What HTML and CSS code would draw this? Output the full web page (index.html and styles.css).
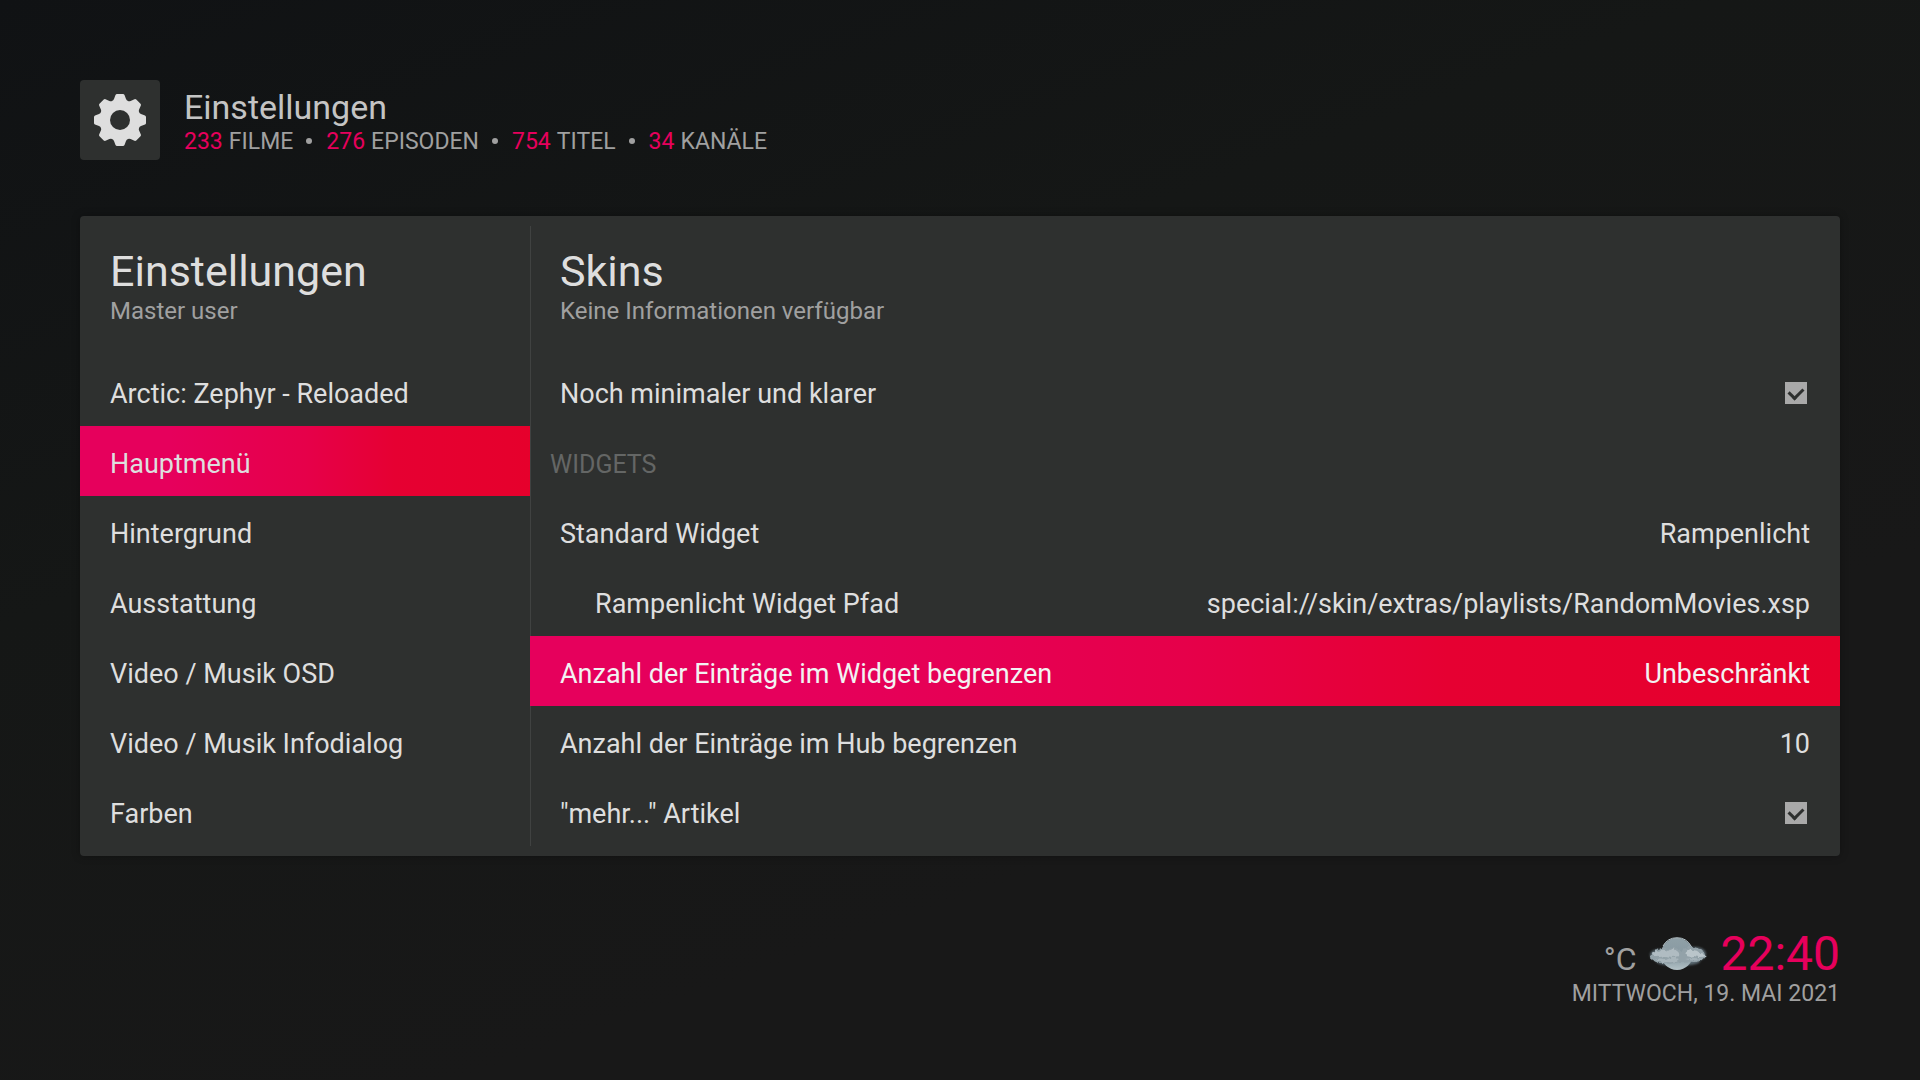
FILE: index.html
```html
<!DOCTYPE html>
<html lang="de">
<head>
    <meta charset="UTF-8">
    <title>Einstellungen</title>
    <link rel="stylesheet" href="styles.css">
</head>
<body>
    <header class="topbar">
        <div class="topbar-icon">
            <svg viewBox="-40 -40 80 80" width="80" height="80" aria-hidden="true">
                <defs>
                    <path id="tooth" d="M-3 -26 H3 Q4 -26 4.500 -25 L6 -21 Q6.600 -19.500 8 -19 L8 -14 H-8 L-8 -19 Q-6.600 -19.500 -6 -21 L-4.500 -25 Q-4 -26 -3 -26 Z"/>
                </defs>
                <g fill="#dedede">
                    <circle r="20"/>
                    <use href="#tooth"/>
                    <use href="#tooth" transform="rotate(45)"/>
                    <use href="#tooth" transform="rotate(90)"/>
                    <use href="#tooth" transform="rotate(135)"/>
                    <use href="#tooth" transform="rotate(180)"/>
                    <use href="#tooth" transform="rotate(225)"/>
                    <use href="#tooth" transform="rotate(270)"/>
                    <use href="#tooth" transform="rotate(315)"/>
                </g>
                <circle r="10" fill="#2e302f"/>
            </svg>
        </div>
        <div class="topbar-text">
            <h1>Einstellungen</h1>
            <ul class="stats">
                <li><b>233</b> FILME</li>
                <li><b>276</b> EPISODEN</li>
                <li><b>754</b> TITEL</li>
                <li><b>34</b> KANÄLE</li>
            </ul>
        </div>
    </header>

    <main class="panel">
        <nav class="column sidebar">
            <div class="heading">
                <h2>Einstellungen</h2>
                <p>Master user</p>
            </div>
            <a class="row" href="#">Arctic: Zephyr - Reloaded</a>
            <a class="row active" href="#">Hauptmenü</a>
            <a class="row" href="#">Hintergrund</a>
            <a class="row" href="#">Ausstattung</a>
            <a class="row" href="#">Video / Musik OSD</a>
            <a class="row" href="#">Video / Musik Infodialog</a>
            <a class="row" href="#">Farben</a>
        </nav>

        <section class="column">
            <div class="heading">
                <h2>Skins</h2>
                <p>Keine Informationen verfügbar</p>
            </div>
            <label class="row" for="minimal">Noch minimaler und klarer <input type="checkbox" id="minimal" checked></label>
            <h3 class="row group">WIDGETS</h3>
            <button type="button" class="row"><span>Standard Widget</span><span>Rampenlicht</span></button>
            <button type="button" class="row sub"><span>Rampenlicht Widget Pfad</span><span>special://skin/extras/playlists/RandomMovies.xsp</span></button>
            <button type="button" class="row active focus"><span>Anzahl der Einträge im Widget begrenzen</span><span>Unbeschränkt</span></button>
            <button type="button" class="row"><span>Anzahl der Einträge im Hub begrenzen</span><span>10</span></button>
            <label class="row" for="more">"mehr..." Artikel <input type="checkbox" id="more" checked></label>
        </section>
    </main>

    <footer class="status">
        <div class="now">
            <span class="temp">°C</span>
            <svg class="weather" viewBox="0 0 60 36" width="60" height="36" aria-hidden="true">
                <defs>
                    <linearGradient id="moon" x1="0" y1="0" x2="0" y2="1">
                        <stop offset="0" stop-color="#8fa0a7"/>
                        <stop offset="0.4" stop-color="#8a9ba3"/>
                        <stop offset="0.7" stop-color="#92a4ab"/>
                        <stop offset="1" stop-color="#b4c2c7"/>
                    </linearGradient>
                    <filter id="haze"><feGaussianBlur stdDeviation="1"/></filter>
                    <!-- rough edges for the clouds -->
                    <filter id="puff">
                        <feTurbulence type="fractalNoise" baseFrequency="0.25" numOctaves="3" seed="4"/>
                        <feDisplacementMap in="SourceGraphic" scale="4" xChannelSelector="R" yChannelSelector="G"/>
                        <feGaussianBlur stdDeviation="0.5"/>
                    </filter>
                </defs>
                <g filter="url(#haze)" fill="#5c6b73">
                    <ellipse cx="12" cy="19" rx="10" ry="6"/>
                    <ellipse cx="47" cy="18" rx="11" ry="7"/>
                    <ellipse cx="30" cy="25" rx="22" ry="5"/>
                </g>
                <circle cx="29" cy="18" r="16" fill="url(#moon)"/>
                <path d="M15 10 A16 16 0 0 1 43 10" fill="none" stroke="#b6c3c9"/>
                <g filter="url(#puff)">
                    <path fill="#93a2a9" d="M2 21 Q4 14 10 14 Q15 10 20 13 Q28 10 34 15 Q38 10 45 11 Q52 12 58 18 Q56 25 47 26 Q38 25 32 26 Q22 29 14 27 Q4 27 2 21 Z"/>
                    <path fill="#b0bcc2" d="M4 17 Q7 14 11 16 Q15 12 20 15 Q25 11 29 15 Q32 17 31 20 Q24 22 18 20 Q10 22 6 20 Z"/>
                    <path fill="#bac5ca" d="M36 18 Q39 12 45 14 Q49 14 52 17 Q57 17 57 20 Q52 22 46 20 Q39 22 36 18 Z"/>
                    <path fill="#a9b6bc" d="M7 24 Q13 21 18 24 Q24 20 31 23 Q27 27 20 26 Q13 27 7 24 Z"/>
                    <path fill="#a5b2b9" d="M37 23 Q46 21 54 23 Q47 26 37 23 Z"/>
                </g>
            </svg>
            <time class="clock">22:40</time>
        </div>
        <div class="date">MITTWOCH, 19. MAI 2021</div>
    </footer>
</body>
</html>
```
FILE: styles.css
```css
* {
    box-sizing: border-box;
}
body {
    margin: 0;
    min-height: 100vh;
    padding: 80px;
    display: flex;
    flex-direction: column;
    font-family: Roboto, "Liberation Sans", sans-serif;
    font-size: 27px;
    color: #dedede;
    background: linear-gradient(160deg, #101214 0%, #151716 35%, #181818 70%);
}
h1, h2, h3, p, ul {
    margin: 0;
    padding: 0;
    font-weight: 400;
}
.topbar {
    display: flex;
    gap: 24px;
    margin-bottom: 56px;
}
.topbar-icon {
    width: 80px;
    height: 80px;
    background: #2e302f;
    border-radius: 4px;
}
.topbar-text {
    padding-top: 7px;
}
.topbar h1 {
    font-size: 34px;
    line-height: 40px;
    color: #c4c4c4;
}
.stats {
    display: flex;
    list-style: none;
    font-size: 23px;
    line-height: 30px;
    color: #a0a0a0;
}
.stats li {
    display: flex;
    align-items: center;
    gap: 6px;
}
.stats li + li::before {
    content: "";
    width: 6px;
    height: 6px;
    margin: 0 8px 3px 13px;
    border-radius: 50%;
    background: #a0a0a0;
}
.stats b {
    font-weight: 400;
    color: #e6005c;
}
.panel {
    display: grid;
    grid-template-columns: 450px 1fr;
    background: #2e302f;
    border-radius: 4px;
    box-shadow: 0 0 8px rgba(0, 0, 0, 0.3);
    position: relative;
}
.panel::before {
    content: "";
    position: absolute;
    left: 450px;
    top: 10px;
    bottom: 10px;
    width: 1px;
    background: #404241;
}
.column {
    display: flex;
    flex-direction: column;
    padding-bottom: 10px;
}
.heading {
    height: 140px;
    padding: 29px 30px 0;
}
.heading h2 {
    font-size: 43px;
    line-height: 52px;
}
.heading p {
    font-size: 24px;
    line-height: 28px;
    color: #a0a0a0;
}
.row {
    display: flex;
    align-items: center;
    justify-content: space-between;
    width: 100%;
    height: 70px;
    padding: 6px 30px 0;
    border: none;
    background: none;
    font: inherit;
    color: inherit;
    text-decoration: none;
}
.row.sub {
    padding-left: 65px;
}
.row.group {
    padding-left: 20px;
    font-size: 25px;
    color: #646665;
}
.row.active {
    background: linear-gradient(90deg, #e6005c 20%, #e6004a 50%, #e60032 70%, #e6002c 100%);
    position: relative;
}
.row.focus {
    color: #f2f2f2;
}
input[type="checkbox"] {
    appearance: none;
    width: 22px;
    height: 22px;
    margin: 0 3px 2px 0;
    background: #a9a9a9;
    display: grid;
    place-items: center;
}
input[type="checkbox"]:checked::before {
    content: "";
    width: 7px;
    height: 11px;
    margin-bottom: 3px;
    border: solid #2e302f;
    border-width: 0 3px 3px 0;
    transform: rotate(45deg);
}
.status {
    display: flex;
    flex-direction: column;
    align-items: flex-end;
    margin-top: 72px;
    color: #a0a0a0;
}
.now {
    display: flex;
    align-items: baseline;
    gap: 12px;
}
.temp {
    font-size: 32px;
}
.weather {
    align-self: center;
}
.clock {
    font-size: 48px;
    line-height: 52px;
    color: #e6005c;
}
.date {
    font-size: 23px;
    line-height: 28px;
}
```
